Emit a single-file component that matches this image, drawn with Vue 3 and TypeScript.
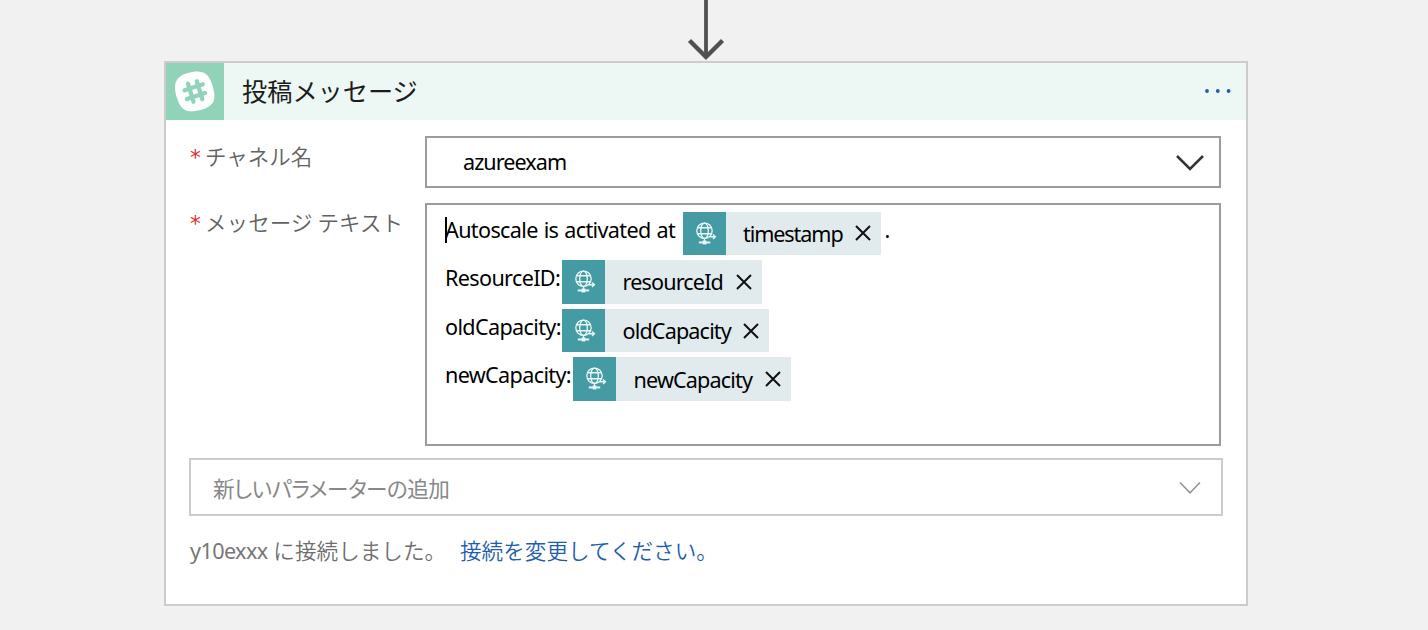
<script setup lang="ts">
interface MessageLine {
  id: string
  label: string
  token: string
  after: string
}

const lines: MessageLine[] = [
  { id: 'time', label: 'Autoscale is activated at', token: 'timestamp', after: '.' },
  { id: 'resource', label: 'ResourceID:', token: 'resourceId', after: '' },
  { id: 'old', label: 'oldCapacity:', token: 'oldCapacity', after: '' },
  { id: 'new', label: 'newCapacity:', token: 'newCapacity', after: '' },
]
</script>

<template>
  <main class="canvas">
    <svg class="connector" viewBox="0 0 40 61" fill="none" stroke="#505050">
      <path d="M20 0V57" stroke-width="3.8" />
      <path d="M3.500 40.500L20 57L36.500 40.500" stroke-width="4.400" />
    </svg>
    <section class="card">
      <header class="head">
        <div class="logo">
          <svg viewBox="0 0 58 58">
            <path d="M21 10.200C34 6.500 42 8 46 21C50.500 35 49.500 42 37 46.200C23 50.500 15.500 49 11.300 36C7 22.500 8 14.500 21 10.200Z" fill="#fff" />
            <g stroke="#90d3b8" stroke-width="4.300" stroke-linecap="round">
              <path d="M22 20.800L27.500 38.700M30.800 18.300L36.300 36.200M18.600 27.300L36.800 21.300M20.900 36L39 30" />
            </g>
          </svg>
        </div>
        <h1 class="title">投稿メッセージ</h1>
        <svg class="more" viewBox="0 0 28 6" fill="#1f5db5">
          <circle cx="3" cy="3" r="1.900" /><circle cx="13.800" cy="3" r="1.900" /><circle cx="24.600" cy="3" r="1.900" />
        </svg>
      </header>
      <div class="body">
        <div class="row">
          <label class="label"><span class="star">*</span>チャネル名</label>
          <div class="select">
            <span class="value">azureexam</span>
            <svg class="chev" viewBox="0 0 30 18" fill="none" stroke="#333" stroke-width="2.500"><path d="M2 3L15 16L28 3" /></svg>
          </div>
        </div>
        <div class="row message">
          <label class="label"><span class="star">*</span>メッセージ テキスト</label>
          <div class="editor">
            <i class="caret"></i>
            <div v-for="line in lines" :key="line.id" class="line">
              <span class="prefix" :class="line.id">{{ line.label }}</span>
              <span class="token" :class="'token-' + line.id">
                <svg class="globe" viewBox="0 0 43 43" fill="none" stroke="#e9f8f8" stroke-width="1.300">
                  <circle cx="21.500" cy="18.500" r="7.700" />
                  <ellipse cx="21.500" cy="18.500" rx="3.800" ry="7.700" />
                  <path d="M14.800 15.500H28.200M14.800 21.500H28M21.500 26V29" />
                  <path d="M15.800 30.200H27.200" stroke-width="2" />
                  <path d="M19.700 30.200H23.300" stroke-width="4" />
                  <path d="M26.500 24.500H32.500M30 22.300L32.500 24.500L30 26.700" />
                </svg>
                <span class="name">{{ line.token }}</span>
                <svg class="close" viewBox="0 0 16 16" stroke="#111" stroke-width="2"><path d="M1 1L15 15M15 1L1 15" /></svg>
              </span>
              <span v-if="line.after" class="after">{{ line.after }}</span>
            </div>
          </div>
        </div>
        <div class="params">
          <span class="placeholder">新しいパラメーターの追加</span>
          <svg class="chev-small" viewBox="0 0 22 14" fill="none" stroke="#929292" stroke-width="1.500"><path d="M1 1.500L11 11.800L21 1.500" /></svg>
        </div>
        <footer class="foot">
          <span class="status"><span class="user">y10exxx</span> に接続しました。</span>
          <a class="link">接続を変更してください。</a>
        </footer>
      </div>
    </section>
  </main>
</template>

<style>
body { margin: 0; background: #f1f1f1; }
</style>

<style scoped>
* { box-sizing: border-box; }
.canvas {
  height: 630px;
  overflow: hidden;
  background: #f1f1f1;
  font-family: "Noto Sans", "Noto Sans CJK JP", sans-serif;
  font-size: 21.6px;
  color: #000;
}
.connector { display: block; width: 40px; height: 61px; margin-left: 686px; }
.card { width: 1084px; height: 545px; margin-left: 164px; border: 2px solid #ccc; background: #fff; }
.head { display: flex; align-items: center; height: 57px; background: #edf7f4; }
.logo { width: 58px; height: 57px; background: #90d3b8; }
.logo svg { display: block; width: 58px; height: 58px; }
.title {
  margin: 0 0 4px 18px;
  font: 400 25.200px/52px "Noto Sans CJK JP", sans-serif;
  color: #1c1c1c;
}
.more { width: 28px; height: 6px; margin: 0 14px 2px auto; }
.body { padding: 16px 23px 0 24px; }
.row { display: flex; height: 52px; padding-right: 2px; }
.label { width: 235px; flex: none; font: 350 21.500px/40px "Noto Sans CJK JP", sans-serif; color: #626262; white-space: nowrap; }
.message .label { line-height: 37px; letter-spacing: 0.100px; }
.star { display: inline-block; width: 15px; font: 400 21.600px/20px "DejaVu Sans", sans-serif; color: #dc2f2f; }
.select { display: flex; flex: 1; align-items: center; justify-content: space-between; border: 2px solid #9c9c9c; padding: 0 14px 0 36px; }
.value { letter-spacing: -0.950px; line-height: 48px; }
.chev { width: 30px; height: 18px; }
.message { height: 243px; margin-top: 15px; }
.editor { position: relative; flex: 1; border: 2px solid #9c9c9c; padding: 6.500px 0 0 18px; }
.caret { position: absolute; left: 18px; top: 12px; width: 1.500px; height: 26px; background: #000; }
.line { display: flex; height: 43.500px; margin-bottom: 5.150px; line-height: 36px; white-space: nowrap; }
.prefix { width: 117px; flex: none; letter-spacing: -0.650px; word-spacing: 1px; }
.prefix.time { width: 237.500px; }
.prefix.new { width: 128px; }
.token { display: flex; height: 43.500px; background: #e1eaed; line-height: 45px; padding-right: 10px; justify-content: space-between; align-items: center; letter-spacing: -0.850px; }
.token-time { width: 198px; letter-spacing: -1.100px; }
.token-resource { width: 200px; }
.token-old { width: 207px; }
.token-new { width: 218px; }
.globe { width: 43px; height: 43.500px; background: #459ba4; flex: none; }
.name { margin-left: 17.500px; margin-right: auto; }
.close { width: 16px; height: 16px; }
.after { margin-left: 4px; }
.params { display: flex; align-items: center; justify-content: space-between; width: 1034px; height: 58px; margin: 12px 0 0 -1px; border: 2px solid #ccc; padding: 1px 20px 0 22px; }
.placeholder { margin-top: 1px; font: 400 21.600px/54px "Noto Sans CJK JP", sans-serif; font-feature-settings: "palt"; letter-spacing: -0.550px; color: #888; }
.chev-small { width: 22px; height: 14px; }
.foot { display: flex; height: 70px; font: 350 21.600px/68px "Noto Sans CJK JP", sans-serif; color: #6e6e6e; white-space: nowrap; }
.status { width: 270px; }
.user { margin-right: 1px; font-family: "Noto Sans"; font-weight: 400; letter-spacing: -0.600px; color: #777; }
.link { color: #1f5db0; }
</style>
